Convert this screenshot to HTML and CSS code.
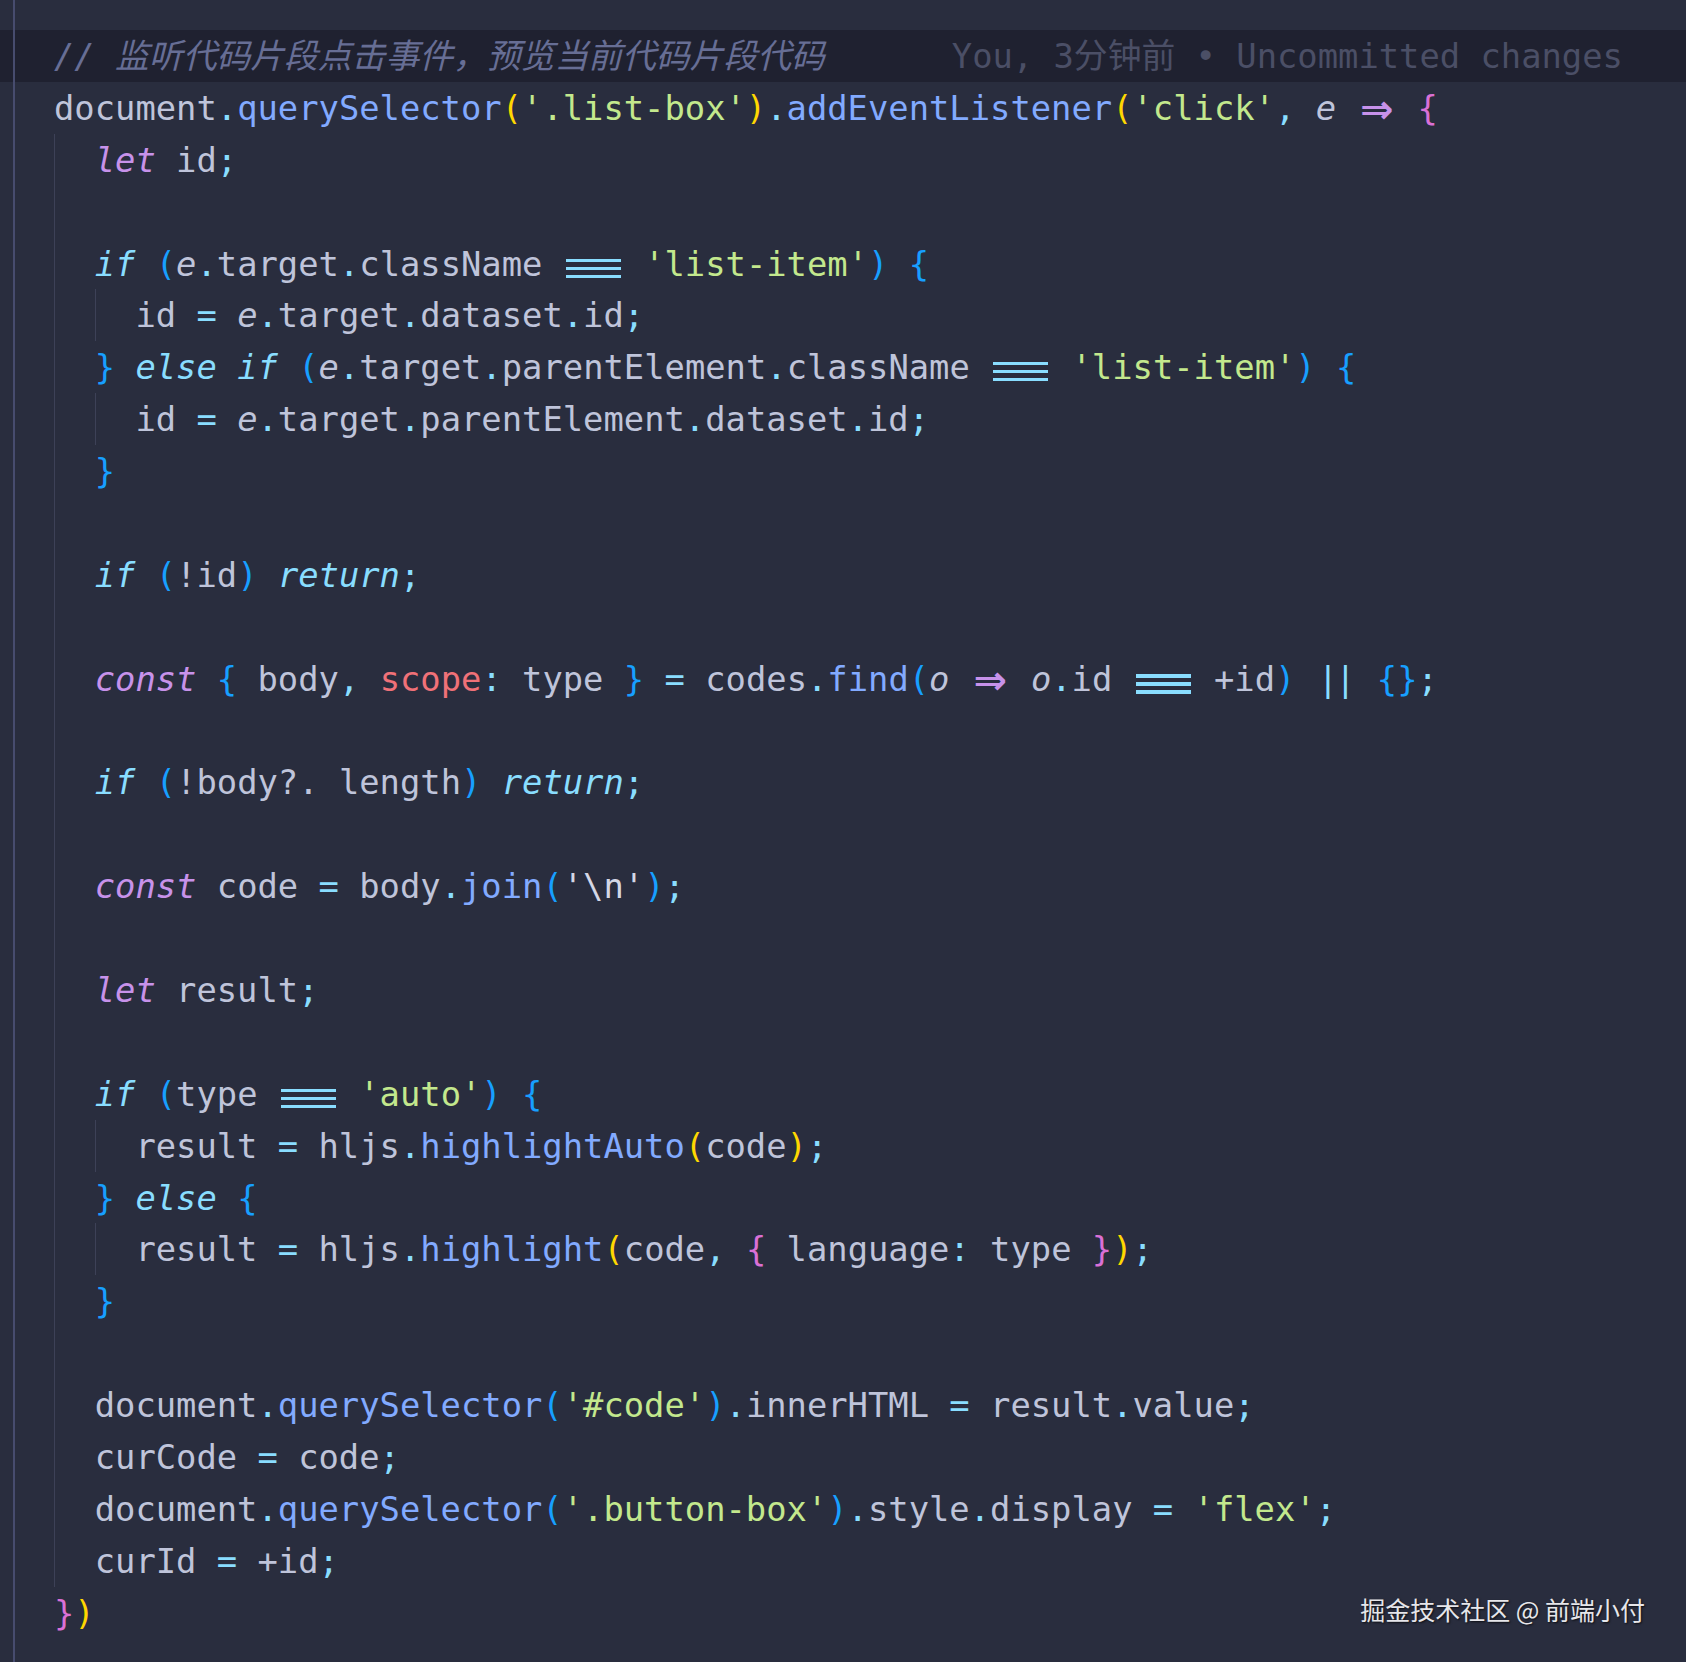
FILE: index.html
```html
<!DOCTYPE html>
<html lang="zh-CN">
<head>
<meta charset="utf-8">
<title>code</title>
<link rel="stylesheet" href="styles.css">
</head>
<body>
<div class="editor">
  <div class="code">
    <div class="line current"><span class="cm">// 监听代码片段点击事件，预览当前代码片段代码</span><span class="bl">You, 3分钟前 • Uncommitted changes</span></div>
    <div class="line">document<span class="p">.</span><span class="f">querySelector</span><span class="b1">(</span><span class="s">'.list-box'</span><span class="b1">)</span><span class="p">.</span><span class="f">addEventListener</span><span class="b1">(</span><span class="s">'click'</span><span class="p">,</span> <span class="i">e</span> <span class="ar">⇒</span> <span class="b2">{</span></div>
    <div class="block">
      <div class="line"><span class="k">let</span> id<span class="p">;</span></div>
      <div class="line"> </div>
      <div class="line"><span class="c">if</span> <span class="b3">(</span><span class="i">e</span><span class="p">.</span>target<span class="p">.</span>className <span class="eq">===</span> <span class="s">'list-item'</span><span class="b3">)</span> <span class="b3">{</span></div>
      <div class="block">
        <div class="line">id <span class="p">=</span> <span class="i">e</span><span class="p">.</span>target<span class="p">.</span>dataset<span class="p">.</span>id<span class="p">;</span></div>
      </div>
      <div class="line"><span class="b3">}</span> <span class="c">else</span> <span class="c">if</span> <span class="b3">(</span><span class="i">e</span><span class="p">.</span>target<span class="p">.</span>parentElement<span class="p">.</span>className <span class="eq">===</span> <span class="s">'list-item'</span><span class="b3">)</span> <span class="b3">{</span></div>
      <div class="block">
        <div class="line">id <span class="p">=</span> <span class="i">e</span><span class="p">.</span>target<span class="p">.</span>parentElement<span class="p">.</span>dataset<span class="p">.</span>id<span class="p">;</span></div>
      </div>
      <div class="line"><span class="b3">}</span></div>
      <div class="line"> </div>
      <div class="line"><span class="c">if</span> <span class="b3">(</span>!id<span class="b3">)</span> <span class="c">return</span><span class="p">;</span></div>
      <div class="line"> </div>
      <div class="line"><span class="k">const</span> <span class="b3">{</span> body<span class="p">,</span> <span class="r">scope</span><span class="p">:</span> type <span class="b3">}</span> <span class="p">=</span> codes<span class="p">.</span><span class="f">find</span><span class="b3">(</span><span class="i">o</span> <span class="ar">⇒</span> <span class="i">o</span><span class="p">.</span>id <span class="eq">===</span> +id<span class="b3">)</span> <span class="or">||</span> <span class="b3">{}</span><span class="p">;</span></div>
      <div class="line"> </div>
      <div class="line"><span class="c">if</span> <span class="b3">(</span>!body?. length<span class="b3">)</span> <span class="c">return</span><span class="p">;</span></div>
      <div class="line"> </div>
      <div class="line"><span class="k">const</span> code <span class="p">=</span> body<span class="p">.</span><span class="f">join</span><span class="b3">(</span><span class="w">'\n'</span><span class="b3">)</span><span class="p">;</span></div>
      <div class="line"> </div>
      <div class="line"><span class="k">let</span> result<span class="p">;</span></div>
      <div class="line"> </div>
      <div class="line"><span class="c">if</span> <span class="b3">(</span>type <span class="eq">===</span> <span class="s">'auto'</span><span class="b3">)</span> <span class="b3">{</span></div>
      <div class="block">
        <div class="line">result <span class="p">=</span> hljs<span class="p">.</span><span class="f">highlightAuto</span><span class="b1">(</span>code<span class="b1">)</span><span class="p">;</span></div>
      </div>
      <div class="line"><span class="b3">}</span> <span class="c">else</span> <span class="b3">{</span></div>
      <div class="block">
        <div class="line">result <span class="p">=</span> hljs<span class="p">.</span><span class="f">highlight</span><span class="b1">(</span>code<span class="p">,</span> <span class="b2">{</span> language<span class="p">:</span> type <span class="b2">}</span><span class="b1">)</span><span class="p">;</span></div>
      </div>
      <div class="line"><span class="b3">}</span></div>
      <div class="line"> </div>
      <div class="line">document<span class="p">.</span><span class="f">querySelector</span><span class="b3">(</span><span class="s">'#code'</span><span class="b3">)</span><span class="p">.</span>innerHTML <span class="p">=</span> result<span class="p">.</span>value<span class="p">;</span></div>
      <div class="line">curCode <span class="p">=</span> code<span class="p">;</span></div>
      <div class="line">document<span class="p">.</span><span class="f">querySelector</span><span class="b3">(</span><span class="s">'.button-box'</span><span class="b3">)</span><span class="p">.</span>style<span class="p">.</span>display <span class="p">=</span> <span class="s">'flex'</span><span class="p">;</span></div>
      <div class="line">curId <span class="p">=</span> +id<span class="p">;</span></div>
    </div>
    <div class="line"><span class="b2">}</span><span class="b1">)</span></div>
  </div>
  <div class="watermark">掘金技术社区 @ 前端小付</div>
</div>
</body>
</html>
```

FILE: styles.css
```css
html, body {
  margin: 0;
  padding: 0;
}

body {
  width: 1686px;
  height: 1662px;
  overflow: hidden;
  background: linear-gradient(to right, #292d3e 13px, #474c6e 13px, #474c6e 15px, #292d3e 15px);
}

.editor {
  position: relative;
  height: 1662px;
  padding-top: 30px;
  box-sizing: border-box;
}

.code {
  padding-left: 54px;
  font-family: "DejaVu Sans Mono", "Noto Sans CJK SC", monospace;
  font-size: 33.8px;
  color: #bfc4da;
}

.line {
  box-sizing: border-box;
  height: 51.9px;
  padding-top: 3px;
  line-height: 48.9px;
  white-space: pre;
}

.current {
  margin-left: -54px;
  padding-left: 54px;
  background: linear-gradient(to right, #1f2130 13px, #474c6e 13px, #474c6e 15px, #1f2130 15px);
}

.block {
  border-left: 1px solid #3d4157;
  padding-left: calc(2ch - 1px);
}

.cm {
  color: #676e95;
  font-style: italic;
}

.bl {
  color: #4b4f66;
  margin-left: 127px;
}

.k {
  color: #c792ea;
  font-style: italic;
}

.c {
  color: #89ddff;
  font-style: italic;
}

.f {
  color: #82aaff;
}

.s {
  color: #c3e88d;
}

.p {
  color: #89ddff;
}

.or {
  color: #89ddff;
  letter-spacing: -3px;
  padding-left: 2px;
  padding-right: 4px;
}

.r {
  color: #f07178;
}

.i {
  font-style: italic;
}

.w {
  color: #d4d7e6;
}

.b1 {
  color: #ffd700;
}

.b2 {
  color: #da70d6;
}

.b3 {
  color: #179fff;
}

.ar {
  display: inline-block;
  width: 40.7px;
  text-align: center;
  font-family: "DejaVu Sans", sans-serif;
  font-size: 40px;
  font-weight: bold;
  color: #c792ea;
  vertical-align: top;
}

.eq {
  display: inline-block;
  width: 3ch;
  color: transparent;
  vertical-align: top;
  background-image: linear-gradient(to bottom,
    transparent 0, transparent 18px,
    #89ddff 18px, #89ddff 21.5px,
    transparent 21.5px, transparent 26px,
    #89ddff 26px, #89ddff 29.5px,
    transparent 29.5px, transparent 34px,
    #89ddff 34px, #89ddff 37.5px,
    transparent 37.5px);
  background-size: calc(100% - 6px) 100%;
  background-position: center top;
  background-repeat: no-repeat;
}

.watermark {
  position: absolute;
  right: 41px;
  top: 1594px;
  font-family: "Noto Sans CJK SC", sans-serif;
  font-size: 25px;
  line-height: 30px;
  color: #e6e6ea;
  text-shadow: 1px 1px 2px rgba(0, 0, 0, 0.7);
}
```
